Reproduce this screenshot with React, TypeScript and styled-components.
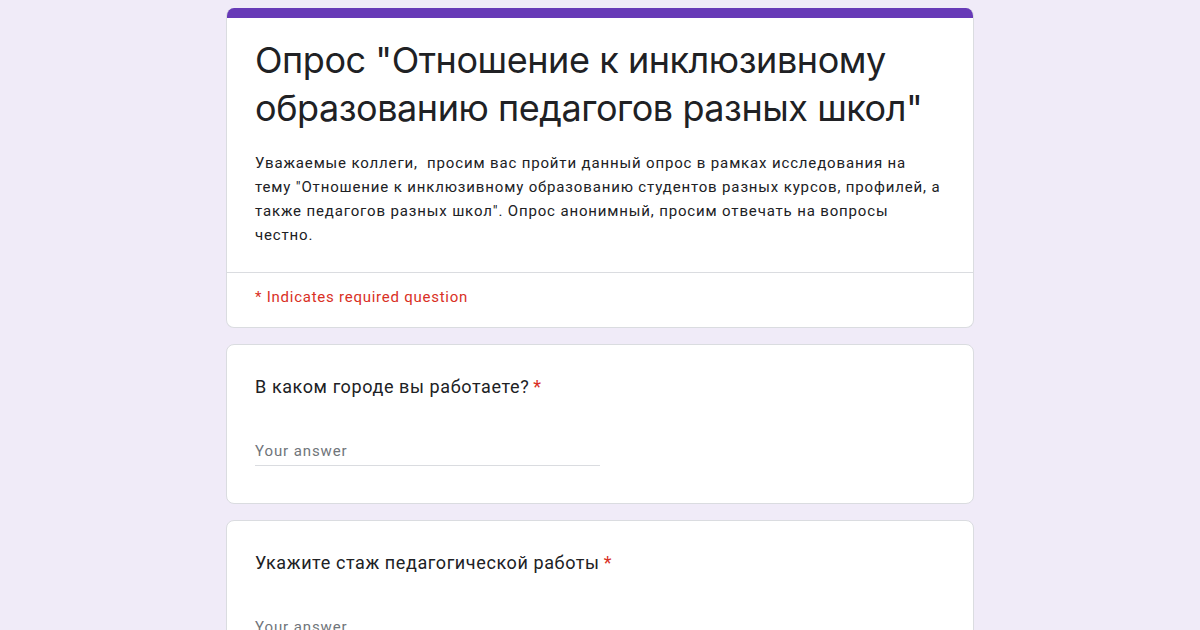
import styled, { createGlobalStyle } from "styled-components";

const GlobalStyle = createGlobalStyle`
  html, body {
    margin: 0;
    padding: 0;
    background: #f0ebf8;
  }
  body {
    font-family: Roboto, "Noto Sans", Arial, sans-serif;
    color: #202124;
  }
`;

const Page = styled.div`
  width: 748px;
  margin: 0 auto;
  padding-top: 8px;
  display: flex;
  flex-direction: column;
  gap: 16px;
`;

const Card = styled.div`
  background: #fff;
  border: 1px solid #dadce0;
  border-radius: 8px;
  overflow: hidden;
`;

const HeaderCard = styled(Card)`
  border-top: none;
`;

const AccentBar = styled.div`
  height: 10px;
  background: #673ab7;
`;

const HeaderBody = styled.div`
  padding: 18px 28px 25px;
`;

const Title = styled.h1`
  margin: 0;
  font-family: Inter, "Open Sans", sans-serif;
  font-weight: 400;
  font-size: 36px;
  line-height: 48px;
  letter-spacing: -0.45px;
  color: #202124;
`;

const Description = styled.p`
  margin: 19px 0 0;
  font-size: 15px;
  line-height: 24px;
  letter-spacing: 0.85px;
  color: #202124;
`;

const Divider = styled.div`
  height: 1px;
  background: #dadce0;
`;

const RequiredNote = styled.div`
  padding: 14px 28px 20px;
  font-size: 15px;
  line-height: 20px;
  color: #d93025;
  letter-spacing: 0.75px;
`;

const QuestionCard = styled(Card)`
  padding: 30px 28px 37px;
`;

const QuestionText = styled.div`
  font-size: 18px;
  line-height: 24px;
  letter-spacing: 0.6px;
  color: #202124;
`;

const Star = styled.span`
  color: #d93025;
  margin-left: 4px;
`;

const AnswerField = styled.div`
  margin-top: 42px;
  width: 345px;
  padding-bottom: 4px;
  border-bottom: 1px solid #dadce0;
  font-size: 15px;
  line-height: 20px;
  color: #70757a;
  letter-spacing: 0.9px;
`;

const questions = [
  "В каком городе вы работаете?",
  "Укажите стаж педагогической работы",
];

export default function App() {
  return (
    <>
      <GlobalStyle />
      <Page>
        <HeaderCard>
          <AccentBar />
          <HeaderBody>
            <Title>
              Опрос "Отношение к инклюзивному образованию педагогов разных
              школ"
            </Title>
            <Description>
              Уважаемые коллеги,&nbsp; просим вас пройти данный опрос в рамках
              исследования на
              <br />
              тему "Отношение к инклюзивному образованию студентов разных
              курсов, профилей, а
              <br />
              также педагогов разных школ". Опрос анонимный, просим отвечать на
              вопросы
              <br />
              честно.
            </Description>
          </HeaderBody>
          <Divider />
          <RequiredNote>* Indicates required question</RequiredNote>
        </HeaderCard>
        {questions.map((q) => (
          <QuestionCard key={q}>
            <QuestionText>
              {q}
              <Star>*</Star>
            </QuestionText>
            <AnswerField>Your answer</AnswerField>
          </QuestionCard>
        ))}
      </Page>
    </>
  );
}
